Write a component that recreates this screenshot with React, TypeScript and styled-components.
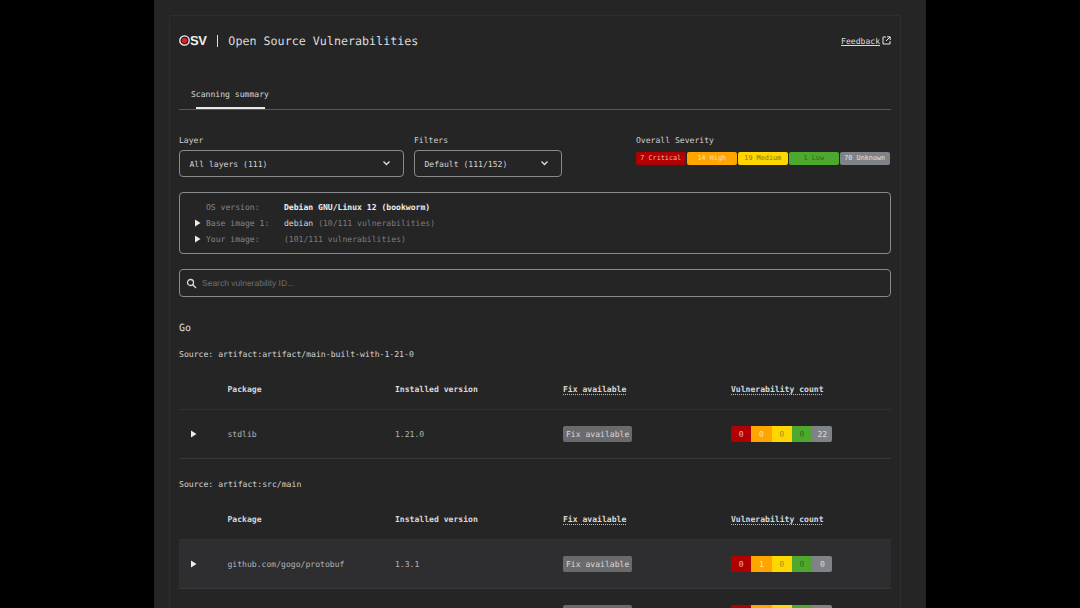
import React from "react";
import styled, { createGlobalStyle } from "styled-components";

const Global = createGlobalStyle`
  html, body { margin: 0; padding: 0; background: #000; height: 608px; overflow: hidden; }
  body { font-family: "DejaVu Sans Mono", "Liberation Mono", monospace; color: #d6d6d6; text-rendering: geometricPrecision; }
`;
const Page = styled.div`
  width: 772px; height: 608px; margin-left: 154px; background: #252526; padding: 15px 15px 0; box-sizing: border-box; overflow: hidden;
`;
const Card = styled.main`
  width: 732px; min-height: 700px; box-sizing: border-box; padding: 0 9px; border: 1px solid #2e2e2f; border-bottom: 0; border-radius: 2px;
`;
const Header = styled.header`
  height: 49px; display: flex; align-items: center; justify-content: space-between;
`;
const Brand = styled.div`display: flex; align-items: center; color: #e4e4e4;`;
const LogoDot = styled.svg`width: 11px; height: 11px; display: block; flex: none;`;
const LogoText = styled.span`font: 700 13px "Liberation Sans", Arial, sans-serif; color: #f0f0f0; letter-spacing: -0.5px;`;
const Sep = styled.span`width: 1px; height: 12px; background: #dddddd; margin: 0 10px 0 11px;`;
const Title = styled.h1`margin: 0; font-size: 11.7px; font-weight: 400; color: #dcdcdc;`;
const FeedbackLink = styled.a`display: flex; align-items: center; gap: 2px; font-size: 8.1px; color: #dcdcdc; text-decoration: underline;`;
const Tabs = styled.nav`
  height: 45px; box-sizing: border-box; border-bottom: 1px solid #57575a; display: flex; align-items: flex-end;
`;
const Tab = styled.div`
  margin-left: 12px; height: 30px; line-height: 30px; font-size: 8.1px; color: #d9d9d9; position: relative; width: 85px;
  &::after { content: ""; position: absolute; left: 5px; width: 69px; bottom: 0; height: 2px; background: #e8e8e8; }
`;
const Controls = styled.section`display: flex; margin-top: 24px; height: 43px;`;
const Field = styled.div<{ $w: number; $mr: number }>`width: ${(p) => p.$w}px; margin-right: ${(p) => p.$mr}px; flex: none;`;
const Label = styled.div`font-size: 8.1px; height: 16px; line-height: 12px; color: #cfcfcf;`;
const SelectBox = styled.div`
  height: 27px; box-sizing: border-box; border: 1px solid #8a8a8d; border-radius: 4px; display: flex; align-items: center; justify-content: space-between;
  padding: 0 12px 0 9.5px; font-size: 8.1px; color: #d4d4d4;
`;
const Pills = styled.div`display: flex; gap: 1.5px; margin-top: 2px;`;
const Pill = styled.span<{ $bg: string; $fg: string }>`
  width: 49.5px; height: 13px; line-height: 13px; border-radius: 2px; text-align: center; font-size: 6.8px; background: ${(p) => p.$bg}; color: ${(p) => p.$fg}; white-space: nowrap;
`;
const InfoBox = styled.section`
  margin-top: 15px; height: 62px; box-sizing: border-box; border: 1px solid #8a8a8d; border-radius: 4px; padding: 6px 0 0 14px;
`;
const InfoRow = styled.div`display: flex; align-items: center; height: 16px; font-size: 8.1px;`;
const ArrowCell = styled.span`width: 12px; flex: none; display: flex; align-items: center;`;
const Key = styled.span`width: 78px; flex: none; color: #858585;`;
const Strong = styled.b`color: #ececec; font-weight: 700;`;
const Val = styled.span`color: #d8d8d8;`;
const Dim = styled.span`color: #7d7d7d;`;
const Search = styled.div`
  margin-top: 15px; height: 28px; box-sizing: border-box; border: 1px solid #8a8a8d; border-radius: 4px; display: flex; align-items: center; padding-left: 6px; gap: 5px;
  width: 712px; font: 400 8.5px "Liberation Sans", Arial, sans-serif; color: #6f6f6f;
`;
const Eco = styled.h2`margin: 26px 0 0; font-size: 10px; line-height: 12px; font-weight: 400; color: #dcdcdc;`;
const Source = styled.h3<{ $mt: number }>`margin: ${(p) => p.$mt}px 0 0; font-size: 8.15px; line-height: 12px; font-weight: 400; color: #d4d4d4;`;
const Row = styled.div`
  display: grid; grid-template-columns: 48.5px 167.5px 168px 168px 1fr; align-items: center; box-sizing: border-box;
`;
const HeadRow = styled(Row)`height: 43px; padding-top: 1px; font-size: 8.1px; font-weight: 700; color: #d8d8d8; border-bottom: 1px solid #303032; margin-top: 7px;`;
const HeadCell = styled.span<{ $col: number }>`grid-column: ${(p) => p.$col};`;
const Tip = styled.span<{ $col: number }>`grid-column: ${(p) => p.$col}; text-decoration: underline dotted #c0c0c0; text-underline-offset: 2px; justify-self: start;`;
const BodyRow = styled(Row)<{ $hl?: boolean }>`
  height: 49px; font-size: 8.1px; color: #b4b4b4; border-bottom: 1px solid #37373a; background: ${(p) => (p.$hl ? "#2e2d2f" : "transparent")};
`;
const RowArrow = styled.span`justify-self: start; margin-left: 11px; display: flex;`;
const FixBadge = styled.span`
  justify-self: start; height: 16px; line-height: 16px; padding: 0 3px; background: #6a6a6c; color: #d8d8d8; border-radius: 2px; font-size: 8.1px;
`;
const Counts = styled.div`display: flex; justify-self: start; border-radius: 2px; overflow: hidden;`;
const Count = styled.span<{ $bg: string; $fg: string }>`
  width: 20.3px; height: 16px; line-height: 16px; text-align: center; font-size: 8.1px; background: ${(p) => p.$bg}; color: ${(p) => p.$fg};
`;
const Arrow = () => (
  <svg width="7" height="8" viewBox="0 0 7 8"><path d="M1 .5 6.5 4 1 7.5z" fill="#ececec" /></svg>
);
const Chevron = () => (
  <svg width="9" height="7" viewBox="0 0 9 7" fill="none"><path d="M1.5 1.5 4.5 4.5 7.5 1.5" stroke="#e0e0e0" strokeWidth="1.3" /></svg>
);
const colors = [
  ["#b00000", "#f0b8b8"],
  ["#ffa500", "#ffe0a8"],
  ["#ffd700", "#a88f10"],
  ["#4ea82e", "#2c6b18"],
  ["#7f8287", "#dcdcdc"],
];
const CountBar = ({ v }: { v: number[] }) => (
  <Counts>{v.map((n, i) => <Count key={i} $bg={colors[i][0]} $fg={colors[i][1]}>{n}</Count>)}</Counts>
);
const TableHead = () => (
  <HeadRow>
    <HeadCell $col={2}>Package</HeadCell>
    <HeadCell $col={3}>Installed version</HeadCell>
    <Tip $col={4}>Fix available</Tip>
    <Tip $col={5}>Vulnerability count</Tip>
  </HeadRow>
);
const PkgRow = ({ name, ver, v, hl }: { name: string; ver: string; v: number[]; hl?: boolean }) => (
  <BodyRow $hl={hl}>
    <RowArrow><Arrow /></RowArrow>
    <span>{name}</span>
    <span>{ver}</span>
    <FixBadge>Fix available</FixBadge>
    <CountBar v={v} />
  </BodyRow>
);

export default function App() {
  return (
    <>
      <Global />
      <Page>
        <Card>
          <Header>
            <Brand>
              <LogoDot viewBox="0 0 11 11">
                <circle cx="5.5" cy="5.5" r="4.7" fill="#3a2020" stroke="#f4f4f4" strokeWidth="1.3" />
                <circle cx="5.5" cy="5.5" r="2.6" fill="#e21f26" />
              </LogoDot>
              <LogoText>SV</LogoText>
              <Sep />
              <Title>Open Source Vulnerabilities</Title>
            </Brand>
            <FeedbackLink>
              Feedback
              <svg width="9" height="9" viewBox="0 0 9 9" fill="none" stroke="#e6e6e6" strokeWidth="1"><path d="M4 1H1v7h7V5M5 .8h3.2V4M8 1 4 5" /></svg>
            </FeedbackLink>
          </Header>
          <Tabs><Tab>Scanning summary</Tab></Tabs>
          <Controls>
            <Field $w={225} $mr={10}><Label>Layer</Label><SelectBox>All layers (111)<Chevron /></SelectBox></Field>
            <Field $w={148} $mr={74}><Label>Filters</Label><SelectBox>Default (111/152)<Chevron /></SelectBox></Field>
            <Field $w={254} $mr={0}>
              <Label>Overall Severity</Label>
              <Pills>
                <Pill $bg="#b00000" $fg="#f0b8b8">7 Critical</Pill>
                <Pill $bg="#ffa500" $fg="#ffe0a8">14 High</Pill>
                <Pill $bg="#ffd700" $fg="#8a7510">19 Medium</Pill>
                <Pill $bg="#4ea82e" $fg="#2c6b18">1 Low</Pill>
                <Pill $bg="#7f8287" $fg="#e4e4e4">70 Unknown</Pill>
              </Pills>
            </Field>
          </Controls>
          <InfoBox>
            <InfoRow><ArrowCell /><Key>OS version:</Key><Strong>Debian GNU/Linux 12 (bookworm)</Strong></InfoRow>
            <InfoRow><ArrowCell><Arrow /></ArrowCell><Key>Base image 1:</Key><Val>debian&nbsp;</Val><Dim>(10/111 vulnerabilities)</Dim></InfoRow>
            <InfoRow><ArrowCell><Arrow /></ArrowCell><Key>Your image:</Key><Dim>(101/111 vulnerabilities)</Dim></InfoRow>
          </InfoBox>
          <Search>
            <svg width="11" height="11" viewBox="0 0 11 11" fill="none" stroke="#dcdcdc" strokeWidth="1.3"><circle cx="4.5" cy="4.5" r="3" /><path d="M6.8 6.8 10 10" /></svg>
            Search vulnerability ID...
          </Search>
          <Eco>Go</Eco>
          <Source $mt={13}>Source: artifact:artifact/main-built-with-1-21-0</Source>
          <TableHead />
          <PkgRow name="stdlib" ver="1.21.0" v={[0, 0, 0, 0, 22]} />
          <Source $mt={19}>Source: artifact:src/main</Source>
          <TableHead />
          <PkgRow name="github.com/gogo/protobuf" ver="1.3.1" v={[0, 1, 0, 0, 0]} hl />
          <PkgRow name="" ver="" v={[0, 1, 0, 0, 0]} />
        </Card>
      </Page>
    </>
  );
}
